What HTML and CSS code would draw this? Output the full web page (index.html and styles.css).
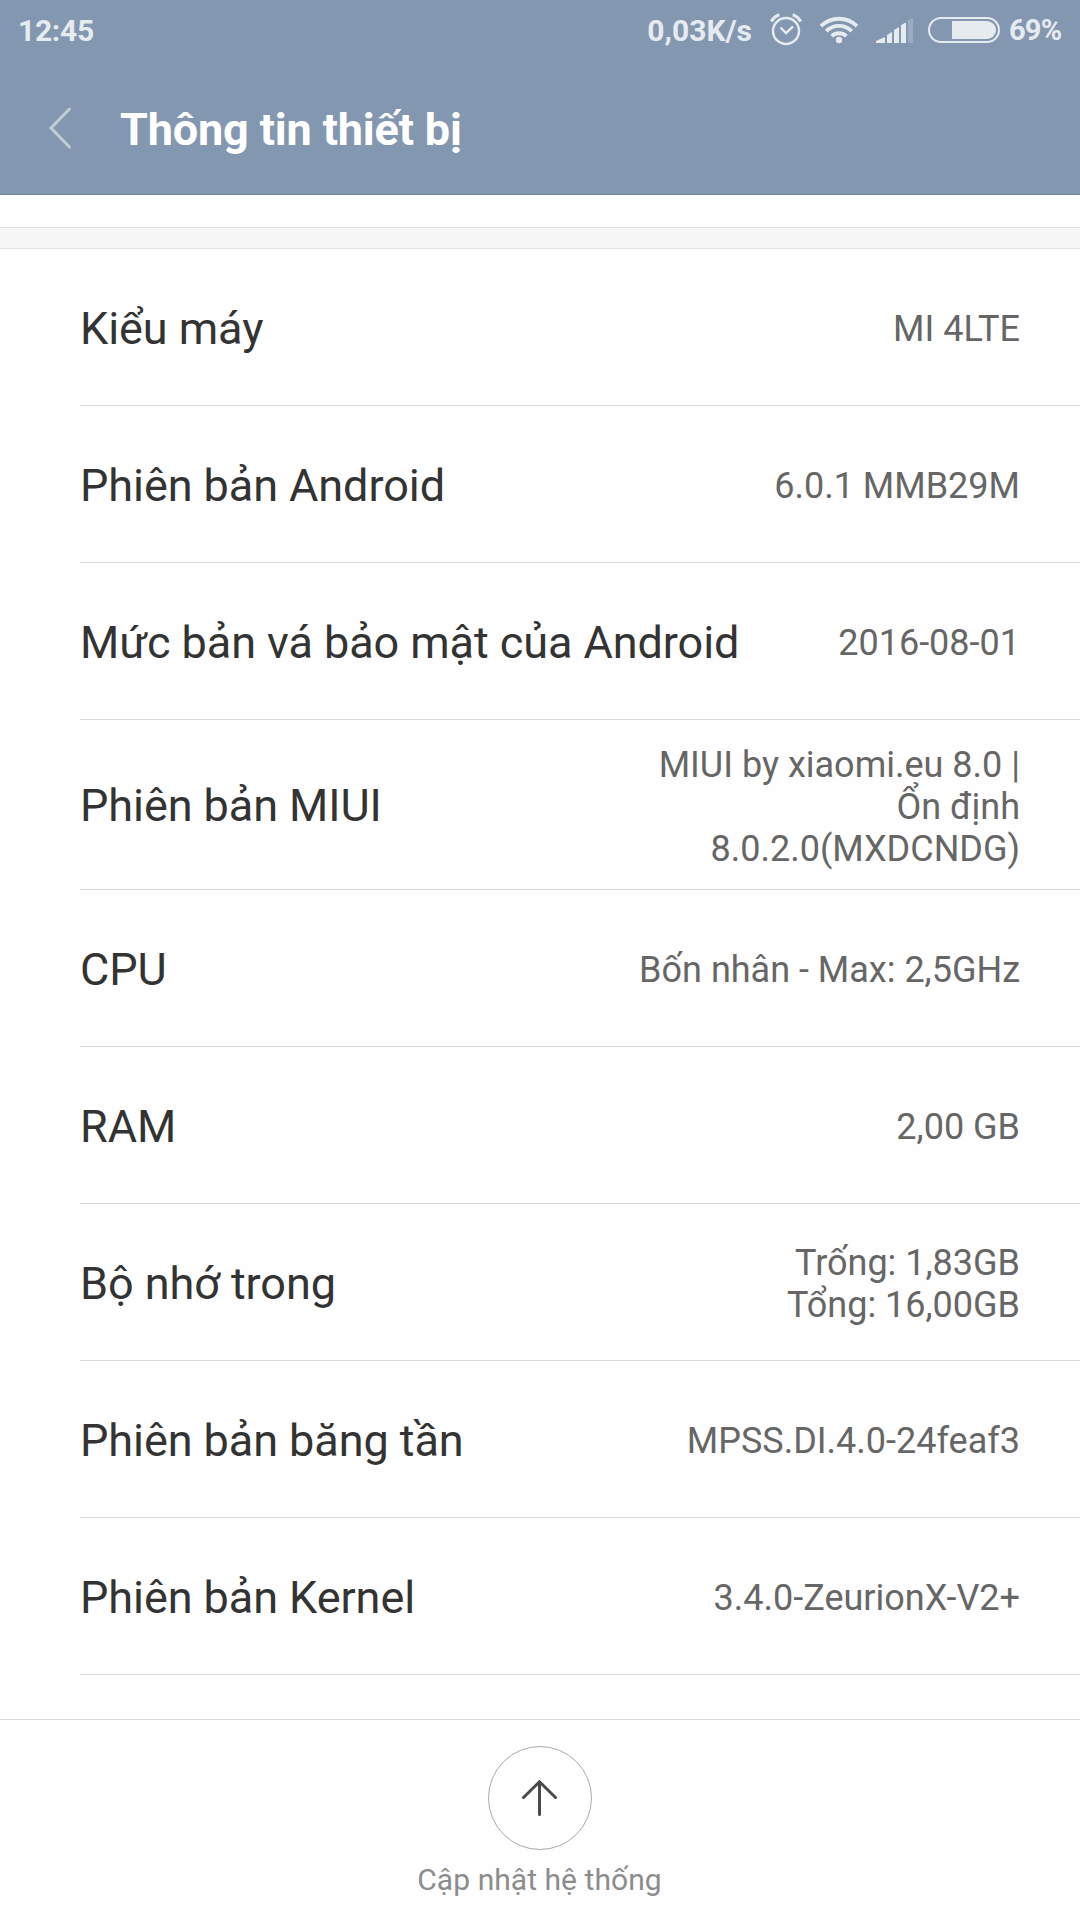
FILE: index.html
```html
<!DOCTYPE html>
<html lang="vi">
<head>
<meta charset="utf-8">
<title>Thông tin thiết bị</title>
<link rel="stylesheet" href="styles.css">
</head>
<body>
  <header>
    <div class="status-bar">
      <span class="clock">12:45</span>
      <span class="speed">0,03K/s</span>
      <svg class="status-icons" width="230" height="60" viewBox="770 0 230 60">
        <!-- alarm -->
        <g fill="none" stroke="#e6ebf0">
          <circle cx="786" cy="31" r="13" stroke-width="2.4"/>
          <path d="M780.5 27.500l5.5 5.500 7-6.500" stroke-width="2.4"/>
          <path d="M771.300 21.500Q774 16.500 779.300 14.700M792.700 14.700Q798 16.500 800.700 21.500" stroke-width="3.2"/>
        </g>
        <!-- wifi -->
        <g fill="none" stroke="#e6ebf0" stroke-width="3.800">
          <path d="M821 26.200a25.500 25.500 0 0 1 36 0"/>
          <path d="M826.200 31.200a18.200 18.200 0 0 1 25.600 0"/>
          <path d="M831.600 36.200a10.700 10.700 0 0 1 14.800 0"/>
        </g>
        <circle cx="839" cy="40" r="3.200" fill="#e6ebf0"/>
        <!-- signal -->
        <g fill="#e6ebf0">
          <path d="M876 43v-2l9-4v6z"/>
          <path d="M887 43v-8l5-3v11z"/>
          <path d="M894 43v-13l5-3v16z"/>
          <path d="M901 43v-18l5-2.500v20.500z"/>
        </g>
        <path d="M908 43v-23l5-2v25z" fill="#9cacbf"/>
        <!-- battery -->
        <rect x="929" y="18" width="70" height="24" rx="12" fill="none" stroke="#e6ebf0" stroke-width="2"/>
        <path d="M952 21h35a9 9 0 0 1 0 18h-35z" fill="#e6ebf0"/>
      </svg>
      <span class="percent">69%</span>
    </div>
    <div class="title-bar">
      <svg class="back" width="24" height="42" viewBox="0 0 24 42">
        <path d="M21.500 2L3 21l18.500 19"/>
      </svg>
      <h1>Thông tin thiết bị</h1>
    </div>
  </header>

  <main>
    <div class="divider"></div>
    <div class="row">
      <span class="label">Kiểu máy</span>
      <span class="value">MI 4LTE</span>
    </div>
    <div class="row">
      <span class="label">Phiên bản Android</span>
      <span class="value">6.0.1 MMB29M</span>
    </div>
    <div class="row">
      <span class="label">Mức bản vá bảo mật của Android</span>
      <span class="value">2016-08-01</span>
    </div>
    <div class="row tall">
      <span class="label">Phiên bản MIUI</span>
      <span class="value">MIUI by xiaomi.eu 8.0 |<br>Ổn định<br>8.0.2.0(MXDCNDG)</span>
    </div>
    <div class="row">
      <span class="label">CPU</span>
      <span class="value">Bốn nhân - Max: 2,5GHz</span>
    </div>
    <div class="row">
      <span class="label">RAM</span>
      <span class="value">2,00 GB</span>
    </div>
    <div class="row">
      <span class="label">Bộ nhớ trong</span>
      <span class="value">Trống: 1,83GB<br>Tổng: 16,00GB</span>
    </div>
    <div class="row">
      <span class="label">Phiên bản băng tần</span>
      <span class="value">MPSS.DI.4.0-24feaf3</span>
    </div>
    <div class="row">
      <span class="label">Phiên bản Kernel</span>
      <span class="value">3.4.0-ZeurionX-V2+</span>
    </div>
  </main>

  <footer>
    <div class="update-btn">
      <svg width="36" height="36" viewBox="0 0 36 36">
        <path d="M17.500 34.500V2M1.500 17.500l16-15.700 16 15.700"/>
      </svg>
    </div>
    <span class="update-text">Cập nhật hệ thống</span>
  </footer>
</body>
</html>
```
FILE: styles.css
```css
* {
  box-sizing: border-box;
}

body {
  margin: 0;
  height: 1920px;
  display: flex;
  flex-direction: column;
  overflow: hidden;
  background-color: #fefefe;
  font-family: Roboto, sans-serif;
}

header {
  height: 195px;
  background-color: #8497b0;
  border-bottom: 1px solid #74859b;
}

.status-bar {
  display: flex;
  align-items: center;
  height: 60px;
  padding-left: 18px;
  color: #e6ebf0;
  font-size: 30px;
  font-weight: bold;
}

.clock {
  letter-spacing: -0.3px;
}

.speed {
  margin-left: auto;
}

.status-icons {
  margin: 0 9px 0 18px;
}

.percent {
  width: 71px;
  font-size: 29px;
  letter-spacing: -0.8px;
}

.title-bar {
  display: flex;
  align-items: center;
  height: 134px;
  padding: 2px 0 0 48px;
}

.back path {
  fill: none;
  stroke: #c2ccd7;
  stroke-width: 3;
  stroke-linecap: round;
}

h1 {
  margin: 0 0 0 48px;
  padding-top: 3px;
  color: #fff;
  font-size: 45px;
  font-weight: bold;
  letter-spacing: -0.15px;
}

main {
  flex: 1;
  padding-top: 32px;
}

.divider {
  height: 22px;
  background-color: #f7f7f7;
  border-top: 1px solid #e2e2e2;
  border-bottom: 1px solid #e2e2e2;
}

.row {
  display: flex;
  align-items: center;
  justify-content: space-between;
  height: 157px;
  margin-left: 80px;
  padding-right: 60px;
  border-bottom: 1px solid #d9d9d9;
}

.tall {
  height: 170px;
}

.label {
  padding-top: 2px;
  color: #333;
  font-size: 45px;
  letter-spacing: -0.07px;
}

.value {
  padding-top: 4px;
  color: #666;
  font-size: 36px;
  line-height: 42px;
  text-align: right;
}

footer {
  display: flex;
  flex-direction: column;
  align-items: center;
  height: 201px;
  padding-top: 26px;
  border-top: 1px solid #d9d9d9;
}

.update-btn {
  display: flex;
  align-items: center;
  justify-content: center;
  width: 104px;
  height: 104px;
  border: 1px solid #aaa;
  border-radius: 50%;
}

.update-btn path {
  fill: none;
  stroke: #4a4a4a;
  stroke-width: 3;
  stroke-linecap: round;
}

.update-text {
  margin-top: 12px;
  padding-right: 1px;
  color: #8c8c8c;
  font-size: 30px;
  letter-spacing: 0.05px;
}
```
